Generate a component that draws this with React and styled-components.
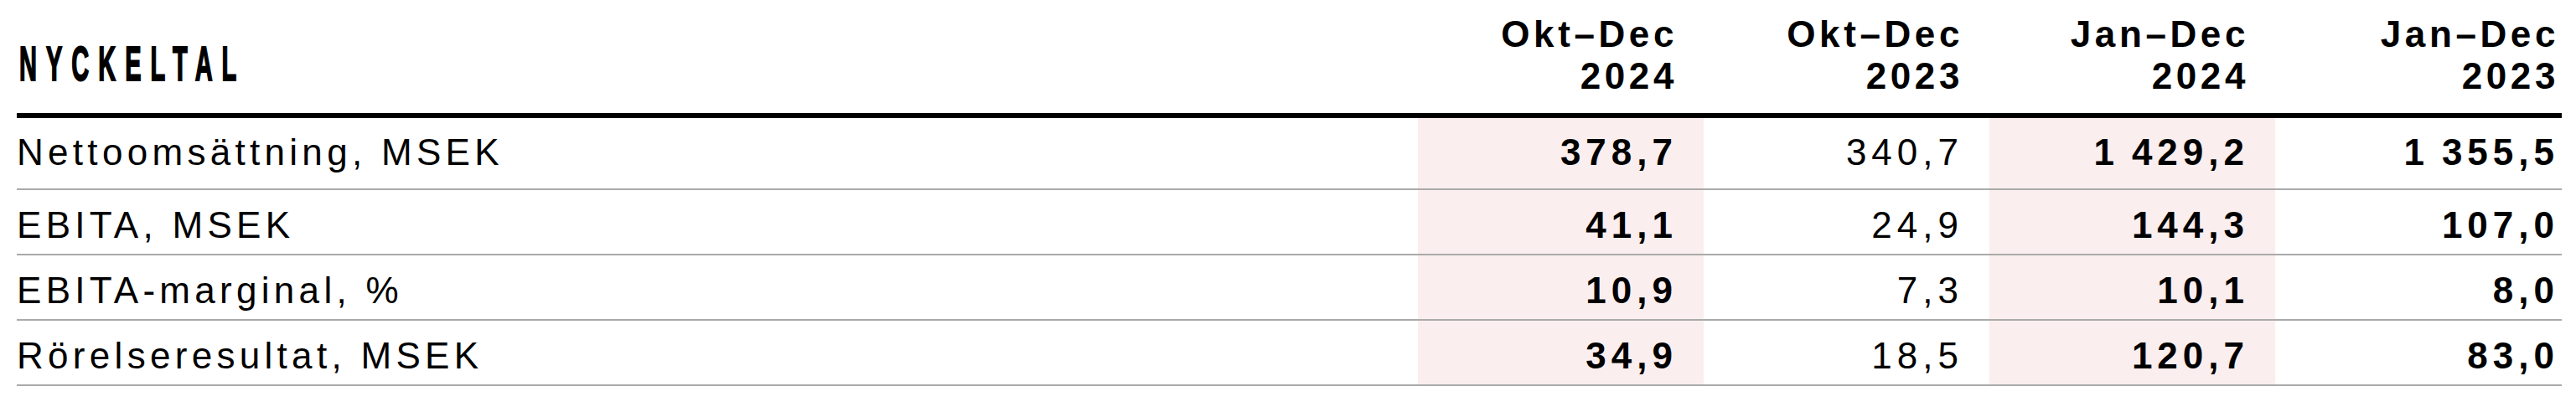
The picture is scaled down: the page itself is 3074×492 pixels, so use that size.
import React from 'react';
import styled, { createGlobalStyle } from 'styled-components';

const GlobalStyle = createGlobalStyle`
  html, body { margin: 0; padding: 0; background: #fff; }
  body { font-family: "Liberation Sans", Arial, sans-serif; color: #000; }
`;

const Page = styled.div`
  padding: 0 17px 0 20px;
`;

const Table = styled.div`
  display: flex;
  flex-direction: column;
`;

const Row = styled.div`
  display: grid;
  grid-template-columns: 1fr 341px 341px 341px 342px;
  border-bottom: ${(p) => (p.$head ? '6px solid #000' : '2px solid #aaa')};
`;

const HeadingCell = styled.div`
  align-self: end;
  padding: 0 0 30px 3px;
`;

const Heading = styled.h2`
  margin: 0;
  display: inline-block;
  font-family: "Liberation Sans", Arial, sans-serif;
  font-weight: 700;
  font-size: 58px;
  line-height: 58px;
  letter-spacing: 22px;
  white-space: nowrap;
  transform: scaleX(0.5);
  transform-origin: left bottom;
  -webkit-text-stroke: 2px #000;
`;

const ColHead = styled.div`
  padding: 16px ${(p) => (p.$last ? 3 : 31)}px 19px 0;
  text-align: right;
  font-weight: 700;
  font-size: 44px;
  line-height: 50px;
  letter-spacing: 4.6px;
  white-space: nowrap;
`;

const LabelCell = styled.div`
  padding: ${(p) => (p.$first ? '15px 0 17px' : '16px 0 8px')};
  font-size: 44px;
  line-height: 52px;
  letter-spacing: 5.3px;
  white-space: nowrap;
`;

const ValueCell = styled.div`
  padding: ${(p) => (p.$first ? '15px' : '16px')} ${(p) => (p.$last ? 3 : 31)}px
    ${(p) => (p.$first ? '17px' : '8px')} 0;
  text-align: right;
  font-size: 44px;
  line-height: 52px;
  letter-spacing: 6px;
  font-weight: ${(p) => (p.$bold ? 700 : 400)};
  background: ${(p) => (p.$hl ? '#fbeeee' : 'transparent')};
  white-space: nowrap;
`;

const columns = [
  { top: 'Okt–Dec', year: '2024', hl: true, bold: true },
  { top: 'Okt–Dec', year: '2023', hl: false, bold: false },
  { top: 'Jan–Dec', year: '2024', hl: true, bold: true },
  { top: 'Jan–Dec', year: '2023', hl: false, bold: true },
];

const rows = [
  { label: 'Nettoomsättning, MSEK', values: ['378,7', '340,7', '1\u2009429,2', '1\u2009355,5'] },
  { label: 'EBITA, MSEK', values: ['41,1', '24,9', '144,3', '107,0'] },
  { label: 'EBITA-marginal, %', values: ['10,9', '7,3', '10,1', '8,0'] },
  { label: 'Rörelseresultat, MSEK', values: ['34,9', '18,5', '120,7', '83,0'] },
];

export default function App() {
  return (
    <>
      <GlobalStyle />
      <Page>
        <Table>
          <Row $head>
            <HeadingCell>
              <Heading>NYCKELTAL</Heading>
            </HeadingCell>
            {columns.map((c, i) => (
              <ColHead key={i} $last={i === columns.length - 1}>
                {c.top}
                <br />
                {c.year}
              </ColHead>
            ))}
          </Row>
          {rows.map((r, ri) => (
            <Row key={r.label}>
              <LabelCell $first={ri === 0}>{r.label}</LabelCell>
              {r.values.map((v, i) => (
                <ValueCell
                  key={i}
                  $first={ri === 0}
                  $last={i === columns.length - 1}
                  $hl={columns[i].hl}
                  $bold={columns[i].bold}
                >
                  {v}
                </ValueCell>
              ))}
            </Row>
          ))}
        </Table>
      </Page>
    </>
  );
}
